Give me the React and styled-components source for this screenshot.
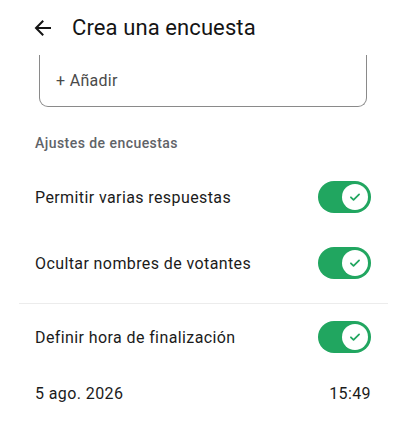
import styled, { createGlobalStyle } from 'styled-components';

const GlobalStyle = createGlobalStyle`
  html, body {
    margin: 0;
    padding: 0;
    background: #ffffff;
    font-family: Roboto, "Noto Sans", "Liberation Sans", sans-serif;
    color: #1b1b1b;
  }
`;

const Page = styled.div`
  width: 413px;
  height: 423px;
  overflow: hidden;
  background: #fff;
`;

const Header = styled.div`
  height: 55px;
  display: flex;
  align-items: center;
  padding-left: 34px;
  gap: 21px;
  box-sizing: border-box;
`;

const Title = styled.h1`
  margin: 0;
  font-size: 22px;
  font-weight: 400;
  color: #141414;
  letter-spacing: 0.1px;
`;

const OptionBox = styled.div`
  margin: 0 46px 0 39px;
  height: 52px;
  border: 1px solid #8a8a8a;
  border-top: none;
  border-radius: 0 0 9px 9px;
  display: flex;
  align-items: center;
  padding-left: 16px;
  font-size: 16px;
  letter-spacing: 0.3px;
  color: #4a4a4a;
  box-sizing: border-box;
`;

const SectionLabel = styled.div`
  padding: 26px 0 0 35px;
  height: 20px;
  line-height: 20px;
  font-size: 14px;
  font-weight: 500;
  letter-spacing: 0.45px;
  color: #5f6368;
  box-sizing: content-box;
`;

const Row = styled.div`
  display: flex;
  align-items: center;
  justify-content: space-between;
  height: ${p => p.$h || 66}px;
  padding: 0 42px 0 35px;
  font-size: 16px;
  letter-spacing: 0.4px;
  color: #1b1b1b;
`;

const Rows = styled.div`
  margin-top: 11px;
`;

const Divider = styled.div`
  height: 1px;
  background: #ececec;
  margin: 7px 25px 0 19px;
`;

const Track = styled.div`
  width: 53px;
  height: 32px;
  border-radius: 16px;
  background: #21a660;
  display: flex;
  align-items: center;
  justify-content: flex-end;
  padding-right: 3px;
  box-sizing: border-box;
`;

const Knob = styled.div`
  width: 26px;
  height: 26px;
  border-radius: 50%;
  background: #fff;
  display: flex;
  align-items: center;
  justify-content: center;
`;

function Toggle() {
  return (
    <Track>
      <Knob>
        <svg width="14" height="14" viewBox="0 0 24 24" fill="none" stroke="#21a660" strokeWidth="3" strokeLinecap="round" strokeLinejoin="round">
          <path d="M5 12.5l4.5 4.5L19 7.5" />
        </svg>
      </Knob>
    </Track>
  );
}

function BackArrow() {
  return (
    <svg width="17" height="16" viewBox="0 0 17 16" fill="none" stroke="#141414" strokeWidth="2" strokeLinecap="square">
      <path d="M16 8H2.5M8.5 1.5L2 8l6.5 6.5" />
    </svg>
  );
}

export default function App() {
  return (
    <Page>
      <GlobalStyle />
      <Header>
        <BackArrow />
        <Title>Crea una encuesta</Title>
      </Header>
      <OptionBox>+ Añadir</OptionBox>
      <SectionLabel>Ajustes de encuestas</SectionLabel>
      <Rows>
        <Row>
          <span>Permitir varias respuestas</span>
          <Toggle />
        </Row>
        <Row>
          <span>Ocultar nombres de votantes</span>
          <Toggle />
        </Row>
        <Divider />
        <Row>
          <span>Definir hora de finalización</span>
          <Toggle />
        </Row>
        <Row $h={46}>
          <span>5 ago. 2026</span>
          <span>15:49</span>
        </Row>
      </Rows>
    </Page>
  );
}
